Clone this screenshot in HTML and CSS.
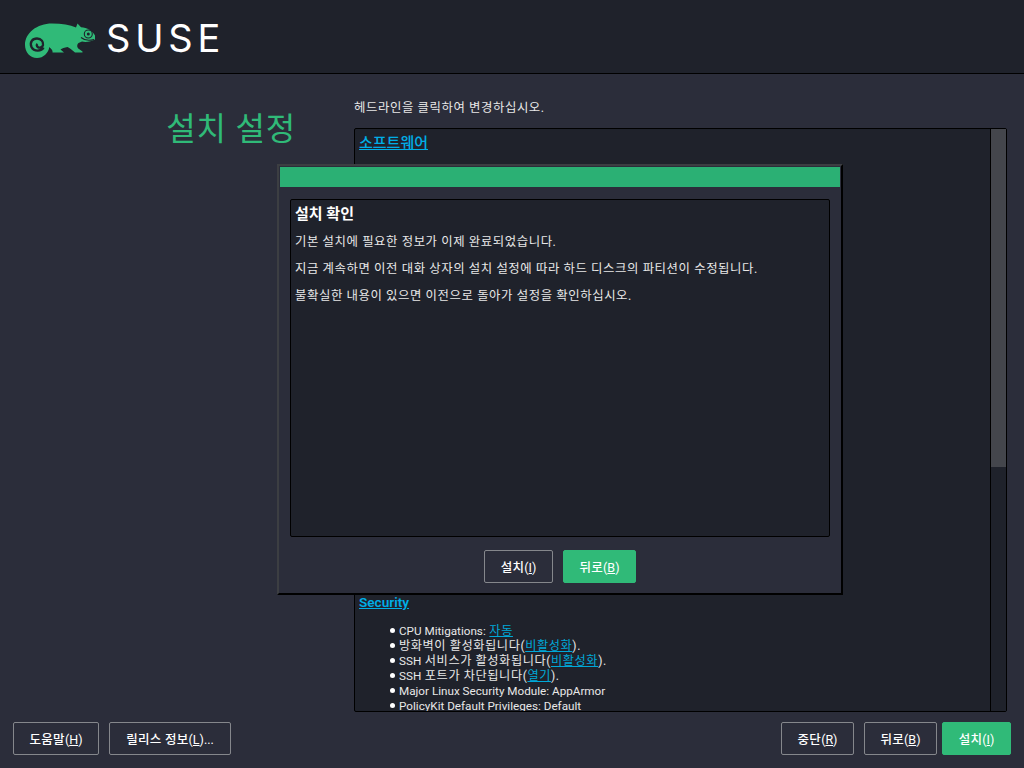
FILE: index.html
```html
<!DOCTYPE html>
<html lang="ko">
<head>
    <meta charset="utf-8">
    <title>설치 설정</title>
    <link rel="stylesheet" href="styles.css">
</head>
<body>
    <header class="topbar">
        <svg class="logo" viewBox="25 23 71 36" width="71" height="36">
            <path fill="#30ba78" d="M25 45C25 33 37 23.5 52 23.5C62 23.5 70 25 76 27.5L77.5 23.5L81 27.2C87 27.5 93 31 95 35.5L95 39.5C91 41.5 86 42.5 82 41.5L78.5 43C76.5 45 77 47.5 79 49L82.5 51.5L82.5 52.5L75 52.5C72 50 70 48 67.5 47C64.5 47.5 62 48.5 60.5 49.5L64 52.5L52.5 52.5C53 50 51 49 49.3 47C48.5 53 43.5 58 37 58C30 58 25 52 25 45Z"/>
            <path fill="none" stroke="#1f222b" stroke-width="2.4" d="M43.5 47.5C41.5 51.5 34 52 31.5 47C29.5 42 32.5 38.5 37 38.5C41.5 38.5 43.5 42 43 45C42.5 47.5 39.5 48.2 38 47.2C36.5 46.2 36.5 44.7 37.5 44"/>
            <circle cx="88.3" cy="34" r="4" fill="none" stroke="#1f222b" stroke-width="1.1"/>
            <circle cx="88.3" cy="34" r="1.5" fill="#1f222b"/>
            <path fill="none" stroke="#1f222b" stroke-width="1.1" d="M81 37.5C84 40 89 41 94 39.5"/>
        </svg>
        <span class="wordmark">SUSE</span>
    </header>

    <main class="content">
        <h1 class="title">설치 설정</h1>
        <div class="summary">
            <p class="hint">헤드라인을 클릭하여 변경하십시오.</p>
            <div class="richbox">
                <div class="richtext">
                    <a class="section-link first" href="#">소프트웨어</a>
                    <a class="section-link security" href="#">Security</a>
                    <ul class="items">
                        <li><span class="latin">CPU Mitigations:</span> <a href="#">자동</a></li>
                        <li>방화벽이 활성화됩니다(<a href="#">비활성화</a>).</li>
                        <li><span class="latin">SSH</span> 서비스가 활성화됩니다(<a href="#">비활성화</a>).</li>
                        <li><span class="latin">SSH</span> 포트가 차단됩니다(<a href="#">열기</a>).</li>
                        <li class="latin">Major Linux Security Module: AppArmor</li>
                        <li class="latin">PolicyKit Default Privileges: Default</li>
                    </ul>
                </div>
                <div class="scrollbar"><div class="thumb"></div></div>
            </div>
        </div>
    </main>

    <footer class="buttons">
        <div class="btn-group">
            <button class="btn help">도움말<span class="latin">(<u>H</u>)</span></button>
            <button class="btn notes">릴리스 정보<span class="latin">(<u>L</u>)...</span></button>
        </div>
        <div class="btn-group">
            <button class="btn abort">중단<span class="latin">(<u>R</u>)</span></button>
            <button class="btn back">뒤로<span class="latin">(<u>B</u>)</span></button>
            <button class="btn primary next">설치<span class="latin">(<u>I</u>)</span></button>
        </div>
    </footer>

    <div class="dialog">
        <div class="dialog-title"></div>
        <div class="dialog-text">
            <h2>설치 확인</h2>
            <p>기본 설치에 필요한 정보가 이제 완료되었습니다.</p>
            <p>지금 계속하면 이전 대화 상자의 설치 설정에 따라 하드 디스크의 파티션이 수정됩니다.</p>
            <p>불확실한 내용이 있으면 이전으로 돌아가 설정을 확인하십시오.</p>
        </div>
        <div class="dialog-buttons">
            <button class="btn next">설치<span class="latin">(<u>I</u>)</span></button>
            <button class="btn primary back">뒤로<span class="latin">(<u>B</u>)</span></button>
        </div>
    </div>
</body>
</html>
```
FILE: styles.css
```css
* {
    box-sizing: border-box;
}

html, body {
    margin: 0;
    height: 768px;
    overflow: hidden;
}

body {
    display: flex;
    flex-direction: column;
    background-color: #2b2d3a;
    color: #ffffff;
    font-family: "Roboto", "Noto Sans CJK KR", sans-serif;
    font-size: 12.4px;
    letter-spacing: 0.57px;
}

a {
    color: #00a8d8;
}

.latin {
    font-size: 11.7px;
    letter-spacing: 0;
}

/* en-tete */
.topbar {
    height: 74px;
    flex: none;
    display: flex;
    align-items: flex-start;
    background-color: #1f222b;
    border-bottom: 1px solid #000000;
    padding: 23px 0 0 25px;
}

.logo {
    display: block;
}

.wordmark {
    margin-left: 10px;
    font-family: "Inter", sans-serif;
    font-size: 38px;
    line-height: 31px;
    letter-spacing: 4.8px;
    color: #ffffff;
}

/* contenu */
.content {
    flex: 1;
    display: flex;
    min-height: 0;
    padding: 0 17px 0 0;
}

.title {
    width: 296px;
    margin: 34px 0 0 0;
    text-align: right;
    font-size: 32px;
    letter-spacing: 0.8px;
    line-height: 42px;
    font-weight: 400;
    color: #30ba78;
}

.summary {
    flex: 1;
    margin-left: 58px;
    padding-top: 25px;
    display: flex;
    flex-direction: column;
}

.hint {
    margin: 0 0 12px 0;
    line-height: 17px;
    color: #e8e8e8;
}

.richbox {
    width: 653px;
    height: 584px;
    display: flex;
    background-color: #1f222b;
    border: 1px solid #000000;
    border-radius: 2px;
}

.richtext {
    flex: 1;
    overflow: hidden;
    padding: 4px 4px 0 4px;
}

.section-link {
    display: table;
    font-size: 15px;
    letter-spacing: 0;
    line-height: 20px;
    font-weight: 500;
    color: #00aee6;
}

.security {
    margin-top: 439px;
    font-size: 13.6px;
    font-weight: 600;
}

.items {
    list-style: none;
    margin: 12px 0 0 0;
    padding: 0 0 0 40px;
    font-size: 12.2px;
}

.items li {
    position: relative;
    height: 15px;
    line-height: 15px;
    color: #e8e8e8;
    white-space: nowrap;
}

.items li.latin {
    font-size: 11.7px;
}

.items li::before {
    content: "";
    position: absolute;
    left: -9px;
    top: 4px;
    width: 5px;
    height: 5px;
    border-radius: 50%;
    background-color: #ffffff;
}

.scrollbar {
    width: 16px;
    flex: none;
    border-left: 1px solid #000000;
    background-color: #1f222b;
}

.thumb {
    height: 338px;
    background-color: #44464c;
}

/* boutons */
.buttons {
    height: 56px;
    flex: none;
    display: flex;
    justify-content: space-between;
    padding: 10px 13px 0 13px;
}

.btn-group {
    display: flex;
    gap: 10px;
}

.btn {
    height: 33px;
    padding: 0;
    background-color: transparent;
    border: 1px solid #85878c;
    border-radius: 2px;
    color: #ffffff;
    font-family: "Roboto", "Noto Sans CJK KR", sans-serif;
    font-size: 12.5px;
    letter-spacing: 0.3px;
    font-weight: 500;
}

.btn .latin {
    font-size: 12.5px;
    font-weight: 400;
}

.primary {
    background-color: #30ba78;
    border-color: #30ba78;
}

.help { width: 86px; }
.notes { width: 122px; }
.abort { width: 73px; }
.back { width: 73px; }
.next { width: 69px; }

.btn-group .primary {
    margin-left: -5px;
}

/* fenetre de confirmation */
.dialog {
    position: absolute;
    left: 277px;
    top: 164px;
    width: 566px;
    height: 431px;
    display: flex;
    flex-direction: column;
    background-color: #2b2d3a;
    border: 2px solid #000000;
    border-top-color: #3c3e42;
    border-left-color: #3c3e42;
    padding: 1px 1px 0 1px;
}

.dialog-title {
    height: 20px;
    flex: none;
    background-color: #2bb074;
}

.dialog-text {
    height: 338px;
    flex: none;
    margin: 12px 10px 0 10px;
    padding: 4px;
    background-color: #1f222b;
    border: 1px solid #000000;
    border-radius: 2px;
}

.dialog-text h2 {
    margin: 0 0 -1px 0;
    font-size: 15px;
    letter-spacing: 0;
    line-height: 20px;
    font-weight: 600;
}

.dialog-text p {
    margin: 10px 0 0 0;
    line-height: 17px;
    color: #e8e8e8;
}

.dialog-buttons {
    display: flex;
    justify-content: center;
    gap: 10px;
    margin-top: 13px;
}
```
